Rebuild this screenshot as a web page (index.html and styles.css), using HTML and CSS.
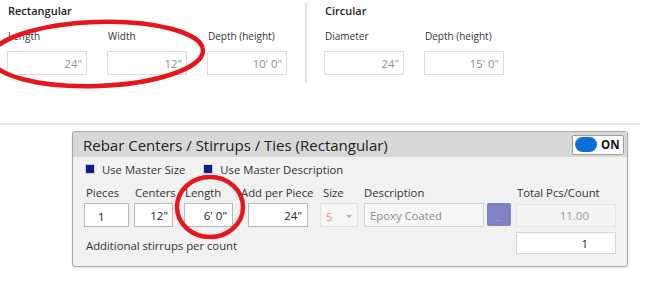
FILE: index.html
```html
<!DOCTYPE html>
<html lang="en">
<head>
<meta charset="UTF-8">
<meta name="viewport" content="width=device-width, initial-scale=1.0">
<title>Rebar Dimensions</title>
<link rel="stylesheet" href="styles.css">
</head>
<body>

<div class="dims">
    <section class="dim-group">
        <h3>Rectangular</h3>
        <div class="fields">
            <div class="field">
                <span class="field-label">Length</span>
                <input class="dim-input" type="text" value='24"' readonly>
            </div>
            <div class="field">
                <span class="field-label">Width</span>
                <input class="dim-input" type="text" value='12"' readonly>
            </div>
            <div class="field">
                <span class="field-label">Depth (height)</span>
                <input class="dim-input" type="text" value="10' 0&quot;" readonly>
            </div>
        </div>
    </section>
    <section class="dim-group circ">
        <h3>Circular</h3>
        <div class="fields">
            <div class="field">
                <span class="field-label">Diameter</span>
                <input class="dim-input" type="text" value='24"' readonly>
            </div>
            <div class="field">
                <span class="field-label">Depth (height)</span>
                <input class="dim-input" type="text" value="15' 0&quot;" readonly>
            </div>
        </div>
    </section>
</div>

<div class="sep"></div>

<div class="panel">
    <div class="panel-head">
        <span class="panel-title">Rebar Centers / Stirrups / Ties (Rectangular)</span>
        <span class="toggle"><span class="knob"></span>ON</span>
    </div>
    <div class="panel-body">
        <div class="checks">
            <label class="check"><span class="box"></span>Use Master Size</label>
            <label class="check"><span class="box"></span>Use Master Description</label>
        </div>
        <div class="grid">
            <span class="lbl lbl-pieces">Pieces</span>
            <span class="lbl">Centers</span>
            <span class="lbl">Length</span>
            <span class="lbl">Add per Piece</span>
            <span class="lbl lbl-size">Size</span>
            <span class="lbl lbl-desc">Description</span>
            <span></span>
            <span class="lbl">Total Pcs/Count</span>

            <input class="cell pieces" type="text" value="1">
            <input class="cell centers" type="text" value='12"'>
            <input class="cell length" type="text" value="6' 0&quot;">
            <input class="cell add" type="text" value='24"'>
            <div class="size-select"><span class="size-val">5</span><span class="caret"></span></div>
            <input class="cell desc" type="text" value="Epoxy Coated" readonly>
            <button class="more" type="button">...</button>
            <input class="cell total" type="text" value="11.00" readonly>

            <span class="note">Additional stirrups per count</span>
            <input class="cell count" type="text" value="1">
        </div>
    </div>
</div>

<svg class="marks" width="650" height="289" viewBox="0 0 650 289">
    <ellipse cx="97" cy="54" rx="106" ry="32" transform="rotate(-2 97 54)" />
    <ellipse cx="210" cy="207" rx="33" ry="30" />
</svg>

</body>
</html>
```

FILE: styles.css
```css
body {
    margin: 0;
    width: 650px;
    height: 289px;
    overflow: hidden;
    position: relative;
    background-color: #fff;
    color: #222;
    font-family: "Open Sans", "Noto Sans", sans-serif;
}
input, button {
    font-family: "Open Sans", "Noto Sans", sans-serif;
    box-sizing: border-box;
    outline: none;
}

/* top dimension groups */
.dims {
    display: flex;
    padding-top: 3px;
}
.dim-group {
    padding: 0 18px 8px 7px;
}
.dim-group.circ {
    border-left: 2px solid #e3e3e3;
    padding-left: 17px;
}
.dim-group h3 {
    margin: 0 0 0 1px;
    font-size: 11px;
    line-height: 16px;
    font-weight: 600;
    color: #222;
}
.fields {
    display: flex;
    gap: 20px;
    margin-top: 10px;
}
.field {
    display: flex;
    flex-direction: column;
}
.field-label {
    font-size: 10px;
    line-height: 15px;
    margin: 0 0 7px 1px;
    color: #333;
    white-space: nowrap;
}
.dim-input {
    width: 80px;
    height: 24px;
    border: 1px solid #dedede;
    padding: 0 4px;
    text-align: right;
    font-size: 11.3px;
    color: #8e8e8e;
    background-color: #fff;
}

.sep {
    width: 640px;
    height: 2px;
    margin-top: 40px;
    background-color: #e8e8e8;
}

/* rebar panel */
.panel {
    width: 556px;
    margin: 6px 0 0 72px;
    box-sizing: border-box;
    border: 1px solid #a8a8a8;
    border-radius: 3px;
    background-color: #f1f1f1;
    box-shadow: 0 1px 2px rgba(0,0,0,0.12);
    overflow: hidden;
}
.panel-head {
    height: 25px;
    display: flex;
    align-items: center;
    justify-content: space-between;
    padding: 0 3px 0 10px;
    background-color: #d8d8d8;
}
.panel-title {
    font-size: 15px;
    line-height: 20px;
    color: #222;
}
.toggle {
    width: 52px;
    height: 20px;
    box-sizing: border-box;
    display: flex;
    align-items: center;
    padding: 0 3px 0 2px;
    border: 1px solid #9c9c9c;
    border-radius: 2px;
    background-color: #fff;
    font-size: 11.5px;
    font-weight: bold;
    color: #111;
}
.knob {
    width: 22px;
    height: 15px;
    margin-right: 4px;
    border-radius: 8px;
    background-color: #0a6fd6;
}
.panel-body {
    padding: 4px 11px 12px 11px;
}
.checks {
    display: flex;
    gap: 18px;
    height: 18px;
    margin-left: 1px;
}
.check {
    display: flex;
    align-items: center;
    gap: 7px;
    font-size: 11.3px;
    line-height: 18px;
    color: #333;
}
.box {
    width: 10px;
    height: 10px;
    box-sizing: border-box;
    margin-top: -3px;
    border: 1px solid #d0d0e8;
    background-color: #111c8c;
}
.grid {
    display: grid;
    grid-template-columns: 50px 50px 56px 80px 44px 123px 29px 100px;
    margin-top: 6px;
}
.lbl {
    font-size: 11.3px;
    line-height: 16px;
    margin-bottom: 2px;
    padding-left: 1px;
    color: #333;
    white-space: nowrap;
}
.lbl-pieces { padding-left: 2px; }
.lbl-size { padding-left: 3px; }
.lbl-desc { padding-left: 0; }
.cell {
    height: 24px;
    border: 1px solid #b8b8b8;
    background-color: #fff;
    font-size: 11.5px;
    color: #222;
    text-align: right;
    padding: 0 5px;
}
.pieces {
    width: 45px;
    text-align: left;
    padding: 2px 0 0 13px;
}
.centers { width: 39px; padding-right: 4px; }
.length { width: 49px; }
.add { width: 60px; margin-left: 8px; }
.size-select {
    width: 38px;
    height: 24px;
    box-sizing: border-box;
    display: flex;
    align-items: center;
    justify-content: space-between;
    padding: 2px 5px 0 5px;
    border: 1px solid #e0e0e0;
    background-color: #f5f5f5;
}
.size-val {
    font-size: 11.5px;
    color: #f29090;
}
.caret {
    width: 0;
    height: 0;
    border-left: 3px solid transparent;
    border-right: 3px solid transparent;
    border-top: 3px solid #b4b4b4;
}
.desc {
    width: 120px;
    text-align: left;
    border-color: #d2d2d2;
    background-color: #f6f6f6;
    color: #8c8c8c;
    font-size: 11.3px;
}
.more {
    width: 24px;
    height: 23px;
    margin-left: 0;
    padding: 6px 0 0 0;
    border: none;
    border-radius: 2px;
    background-color: #7f82c7;
    color: #b9bce6;
    font-size: 8px;
    line-height: 10px;
}
.total {
    width: 100px;
    margin-top: 1px;
    height: 23px;
    padding-right: 26px;
    border-color: #e4e4e4;
    background-color: #f4f4f4;
    color: #9a9a9a;
}
.note {
    grid-column: 1 / 8;
    align-self: end;
    margin-left: 2px;
    font-size: 11.3px;
    line-height: 16px;
    color: #333;
}
.count {
    width: 100px;
    height: 22px;
    margin-top: 5px;
    padding-right: 27px;
    border-color: #d6d6d6;
}

/* red annotation marks drawn over the form */
.marks {
    position: absolute;
    top: 0;
    left: 0;
    pointer-events: none;
}
.marks ellipse {
    fill: none;
    stroke: #e5161c;
    stroke-width: 4.5;
}
```
